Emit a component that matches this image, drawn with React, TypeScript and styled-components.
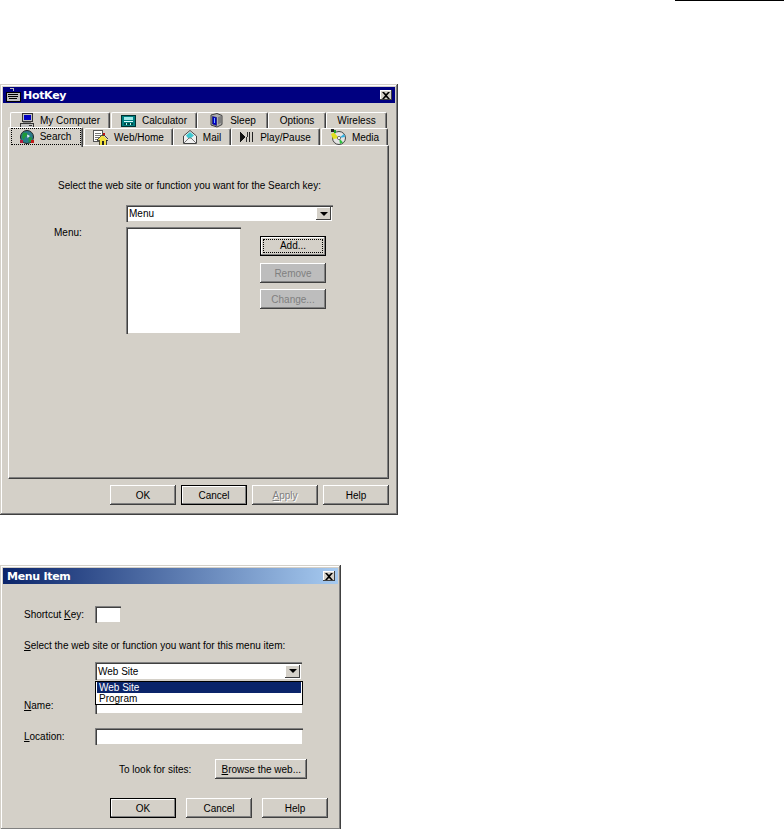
import React from "react";
import styled, { createGlobalStyle } from "styled-components";

const Global = createGlobalStyle`
  html, body { margin: 0; padding: 0; background: #fff; }
  body { font-family: "Liberation Sans", Arial, sans-serif; font-size: 10px; color: #000; }
`;

const Page = styled.div`
  width: 784px;
  height: 829px;
  overflow: hidden;
  background: #fff;
`;
const TopRule = styled.div`
  height: 1px;
  margin-left: 675px;
  background: #000;
`;
const Dialog = styled.div<{ $w: number; $h: number; $mt: number }>`
  box-sizing: border-box;
  width: ${(p) => p.$w}px;
  height: ${(p) => p.$h}px;
  margin-top: ${(p) => p.$mt}px;
  padding: 3px;
  background: #d4d0c8;
  box-shadow: inset -1px -1px #404040, inset 1px 1px #d4d0c8, inset -2px -2px #808080, inset 2px 2px #fff;
`;
const TitleBar = styled.div<{ $gradient?: boolean }>`
  height: 16px;
  display: flex;
  align-items: center;
  padding: 0 3px 0 2px;
  background: ${(p) => (p.$gradient ? "linear-gradient(90deg, #0a246a, #a6caf0)" : "#000080")};
  color: #fff;
  font: bold 11px "DejaVu Sans", Verdana, sans-serif;
  letter-spacing: -0.3px;
`;
const TitleText = styled.span`
  flex: 1;
  margin-left: 2px;
  white-space: nowrap;
`;
const CloseBox = styled.span`
  width: 12px;
  height: 10px;
  background: #d4d0c8;
  box-shadow: inset -1px -1px #404040, inset 1px 1px #fff;
  display: flex;
  align-items: center;
  justify-content: center;
`;
const TabRow = styled.div<{ $ml: number; $mt: number; $front?: boolean }>`
  display: flex;
  height: ${(p) => (p.$front ? 17 : 16)}px;
  margin: ${(p) => p.$mt}px 0 0 ${(p) => p.$ml}px;
  position: relative;
  z-index: ${(p) => (p.$front ? 2 : 1)};
`;
const Tab = styled.div<{ $w: number; $active?: boolean; $ml?: number }>`
  box-sizing: border-box;
  width: ${(p) => p.$w}px;
  height: ${(p) => (p.$active ? 20 : "auto")};
  margin-left: ${(p) => p.$ml ?? 0}px;
  display: flex;
  align-items: center;
  justify-content: center;
  gap: 6px;
  background: #d4d0c8;
  white-space: nowrap;
  border-top: 1px solid #fff;
  border-left: 1px solid #fff;
  border-right: 1px solid #404040;
  border-top-left-radius: 2px;
  border-top-right-radius: 2px;
  box-shadow: inset -1px 0 #808080;
  ${(p) =>
    p.$active &&
    `
    height: 20px;
    margin-top: -1px;
    position: relative;
    z-index: 3;
  `}
`;
const FocusBox = styled.span`
  display: flex;
  align-items: center;
  justify-content: center;
  gap: 6px;
  width: 68px;
  height: 15px;
  outline: 1px dotted #000;
  margin-top: -2px;
`;
const Panel = styled.div`
  box-sizing: border-box;
  width: 381px;
  height: 334px;
  margin-left: 5px;
  padding: 33px 0 0 45px;
  border-top: 1px solid #fff;
  border-left: 1px solid #fff;
  border-right: 1px solid #404040;
  border-bottom: 1px solid #404040;
  box-shadow: inset -1px -1px #808080;
`;
const Prompt = styled.div<{ $ml?: number; $mt?: number }>`
  height: 13px;
  line-height: 13px;
  margin-left: ${(p) => p.$ml ?? 0}px;
  margin-top: ${(p) => p.$mt ?? 0}px;
  white-space: nowrap;
`;
const Sunken = styled.div<{ $w: number; $h: number }>`
  box-sizing: border-box;
  width: ${(p) => p.$w}px;
  height: ${(p) => p.$h}px;
  background: #fff;
  box-shadow: inset 1px 1px #808080, inset 2px 2px #404040, inset -1px -1px #d4d0c8, inset -2px -2px #fff;
`;
const ComboWrap = styled.div<{ $ml: number; $mt: number }>`
  position: relative;
  width: 207px;
  margin-left: ${(p) => p.$ml}px;
  margin-top: ${(p) => p.$mt}px;
`;
const ComboBox = styled(Sunken)`
  display: flex;
  align-items: center;
  justify-content: space-between;
  padding: 0 2px 0 3px;
`;
const ArrowBtn = styled.span`
  width: 15px;
  height: ${13}px;
  background: #d4d0c8;
  box-shadow: inset -1px -1px #404040, inset 1px 1px #fff;
  display: flex;
  align-items: center;
  justify-content: center;
`;
const Arrow = styled.span`
  width: 0;
  height: 0;
  border-left: 4px solid transparent;
  border-right: 4px solid transparent;
  border-top: 4px solid #000;
`;
const DropList = styled.div`
  position: absolute;
  z-index: 5;
  top: 19px;
  left: 0;
  box-sizing: border-box;
  width: 208px;
  height: 24px;
  padding: 0 1px;
  background: #fff;
  border: 1px solid #000;
`;
const DropItem = styled.div<{ $selected?: boolean }>`
  height: 11px;
  line-height: 11px;
  padding-left: 2px;
  background: ${(p) => (p.$selected ? "#0a246a" : "transparent")};
  color: ${(p) => (p.$selected ? "#fff" : "#000")};
`;
const ListRow = styled.div`
  display: flex;
  margin-top: 5px;
`;
const FieldLabel = styled.div<{ $w: number; $offset?: number }>`
  width: ${(p) => p.$w}px;
  height: 13px;
  line-height: 13px;
  flex: none;
  margin-top: ${(p) => p.$offset ?? 0}px;
  white-space: nowrap;
`;
const ButtonColumn = styled.div`
  display: flex;
  flex-direction: column;
  margin: 9px 0 0 19px;
`;
const Button = styled.div<{ $w?: number; $default?: boolean; $muted?: boolean; $grayed?: boolean; $mt?: number }>`
  box-sizing: border-box;
  width: ${(p) => p.$w ?? 66}px;
  height: 20px;
  margin-top: ${(p) => p.$mt ?? 0}px;
  display: flex;
  align-items: center;
  justify-content: center;
  background: ${(p) => (p.$grayed ? "#bdbdbd" : "#d4d0c8")};
  color: ${(p) => (p.$muted ? "#808080" : "#000")};
  text-shadow: ${(p) => (p.$muted && !p.$grayed ? "1px 1px #fff" : "none")};
  box-shadow: ${(p) =>
    p.$default
      ? "inset 0 0 0 1px #000, inset -2px -2px #808080, inset 2px 2px #fff"
      : "inset -1px -1px #404040, inset 1px 1px #fff, inset -2px -2px #808080"};
`;
const FocusLabel = styled.span`
  box-sizing: border-box;
  width: 58px;
  height: 12px;
  line-height: 12px;
  text-align: center;
  outline: 1px dotted #000;
`;
const Footer = styled.div<{ $pl: number; $mt: number; $gap: number }>`
  display: flex;
  gap: ${(p) => p.$gap}px;
  padding-left: ${(p) => p.$pl}px;
  margin-top: ${(p) => p.$mt}px;
`;
const Body = styled.div`
  padding-left: 21px;
`;
const FormRow = styled.div<{ $mt: number }>`
  display: flex;
  align-items: center;
  margin-top: ${(p) => p.$mt}px;
`;
const BrowseRow = styled.div`
  display: flex;
  align-items: center;
  margin-top: 14px;
  padding-left: 95px;
  gap: 24px;
`;

const CloseIcon = () => (
  <svg width="8" height="7" viewBox="0 0 8 7">
    <path d="M0 0h2l2 2 2-2h2L5 3.5 8 7H6L4 5 2 7H0l3-3.5z" fill="#000" />
  </svg>
);
const KeyboardIcon = () => (
  <svg width="16" height="16" viewBox="0 0 16 16" shapeRendering="crispEdges">
    <path d="M8 1h1v3H8zM5 1h3v1H5z" fill="#c0c0c0" />
    <rect x="1" y="5" width="14" height="9" fill="#c0c0c0" stroke="#000" />
    <rect x="3" y="7" width="10" height="1" fill="#000" />
    <rect x="3" y="9" width="10" height="1" fill="#000" />
    <rect x="4" y="11" width="8" height="1" fill="#000" />
    <rect x="1" y="14" width="14" height="1" fill="#000" />
  </svg>
);
const ComputerIcon = () => (
  <svg width="14" height="16" viewBox="0 0 14 16" shapeRendering="crispEdges">
    <rect x="2.5" y="0.5" width="10" height="8" fill="#c0c0c0" stroke="#333" />
    <rect x="4" y="2" width="7" height="5" fill="#0000c0" />
    <rect x="0.5" y="10.5" width="13" height="4" fill="#c0c0c0" stroke="#333" />
    <rect x="3" y="9" width="8" height="1" fill="#808080" />
    <rect x="9" y="12" width="3" height="1" fill="#333" />
  </svg>
);
const CalculatorIcon = () => (
  <svg width="15" height="12" viewBox="0 0 15 12" shapeRendering="crispEdges">
    <rect x="0.5" y="0.5" width="14" height="11" fill="#008080" stroke="#003030" />
    <rect x="3" y="2" width="9" height="3" fill="#9fe8e8" />
    <rect x="3" y="6" width="9" height="1" fill="#dff" />
    <rect x="3" y="8" width="9" height="2" fill="#004848" />
    <rect x="5" y="8" width="1" height="2" fill="#bfe" />
    <rect x="9" y="8" width="1" height="2" fill="#bfe" />
  </svg>
);
const SleepIcon = () => (
  <svg width="15" height="15" viewBox="0 0 15 15">
    <path d="M2 2l6-1.5 5 2v9l-5 2.5-6-2z" fill="#b0b0b0" stroke="#404040" />
    <path d="M3.5 3.5l4 1v8l-4-1.5z" fill="#0000c8" stroke="#101060" strokeWidth=".6" />
    <path d="M9 4l3-1v7l-3 1.5z" fill="#808080" />
    <path d="M5 5h1v5H5z" fill="#70b0ff" />
  </svg>
);
const GlobeIcon = () => (
  <svg width="14" height="14" viewBox="0 0 14 14">
    <circle cx="7" cy="7" r="6.5" fill="#2a7a8a" stroke="#222" />
    <path d="M3 2.5l4 .5 1 3-3 1-1 3-2-2.5zM9 7l3 .5-1 4-2.5 1z" fill="#1e9a3a" />
    <path d="M7 4.5l3 1.5-2.5 2z" fill="#e8f4ff" />
    <rect x="11" y="10" width="3" height="3" fill="#c01818" />
    <rect x="0" y="10" width="3" height="3" fill="#b02040" />
  </svg>
);
const HomeIcon = () => (
  <svg width="15" height="15" viewBox="0 0 15 15" shapeRendering="crispEdges">
    <rect x="0.5" y="0.5" width="9" height="11" fill="#fff" stroke="#555" />
    <path d="M2 3h6v1H2zM2 5h6v1H2zM2 7h4v1H2zM2 9h3v1H2z" fill="#777" />
    <path d="M10 3h2v2h-2z" fill="#c01010" />
    <path d="M9.5 5L15 10h-2v5H6v-5H4z" fill="#f0e040" stroke="#222" strokeWidth=".8" />
    <rect x="9" y="11" width="2" height="4" fill="#222" />
  </svg>
);
const MailIcon = () => (
  <svg width="14" height="14" viewBox="0 0 14 14">
    <path d="M.5 6L7 .5 13.5 6v7.5H.5z" fill="#f0f0f0" stroke="#444" />
    <path d="M3 5.5L7 2l4 3.5L8 8H5z" fill="#40c8d0" />
    <path d="M.5 13.5L6 8h2l5.5 5.5" fill="none" stroke="#777" />
  </svg>
);
const PlayPauseIcon = () => (
  <svg width="14" height="10" viewBox="0 0 14 10" shapeRendering="crispEdges">
    <path d="M0 0l5 5-5 5z" fill="#111" />
    <path d="M7.5 0h1L6.5 10h-1z" fill="#333" />
    <rect x="9" y="0" width="1.4" height="10" fill="#222" />
    <rect x="12" y="0" width="1.4" height="10" fill="#222" />
  </svg>
);
const MediaIcon = () => (
  <svg width="16" height="16" viewBox="0 0 16 16">
    <circle cx="9" cy="9" r="6.5" fill="#e4e4e4" stroke="#444" />
    <path d="M9 9L4 3.5 1 5l2 5z" fill="#e0e020" />
    <path d="M9 9l1 6 3-1.5z" fill="#30c040" />
    <path d="M9 9l6-1-1-3z" fill="#30b0e0" />
    <circle cx="9" cy="9" r="1.6" fill="#fff" stroke="#444" strokeWidth=".7" />
    <rect x="1" y="0" width="3" height="3" fill="#222" />
    <rect x="4" y="1" width="2" height="3" fill="#20a030" />
  </svg>
);

export default function App() {
  return (
    <Page>
      <Global />
      <TopRule />
      <Dialog $w={398} $h={431} $mt={83}>
        <TitleBar>
          <KeyboardIcon />
          <TitleText>HotKey</TitleText>
          <CloseBox>
            <CloseIcon />
          </CloseBox>
        </TitleBar>
        <TabRow $ml={7} $mt={9}>
          <Tab $w={100}><ComputerIcon />My Computer</Tab>
          <Tab $w={86} $ml={1}><CalculatorIcon />Calculator</Tab>
          <Tab $w={71}><SleepIcon />Sleep</Tab>
          <Tab $w={58}>Options</Tab>
          <Tab $w={61}>Wireless</Tab>
        </TabRow>
        <TabRow $ml={5} $mt={0} $front>
          <Tab $w={75} $active>
            <FocusBox><GlobeIcon />Search</FocusBox>
          </Tab>
          <Tab $w={89} $ml={1}><HomeIcon />Web/Home</Tab>
          <Tab $w={58}><MailIcon />Mail</Tab>
          <Tab $w={89}><PlayPauseIcon />Play/Pause</Tab>
          <Tab $w={67} $ml={1}><MediaIcon />Media</Tab>
        </TabRow>
        <Panel>
          <Prompt $ml={4}>Select the web site or function you want for the Search key:</Prompt>
          <ComboWrap $ml={72} $mt={13}>
            <ComboBox $w={207} $h={17}>
              Menu
              <ArrowBtn><Arrow /></ArrowBtn>
            </ComboBox>
          </ComboWrap>
          <ListRow>
            <FieldLabel $w={72} $offset={-1}>Menu:</FieldLabel>
            <Sunken $w={115} $h={107} />
            <ButtonColumn>
              <Button $default><FocusLabel>Add...</FocusLabel></Button>
              <Button $muted $grayed $mt={7}>Remove</Button>
              <Button $muted $grayed $mt={6}>Change...</Button>
            </ButtonColumn>
          </ListRow>
        </Panel>
        <Footer $pl={107} $mt={6} $gap={5}>
          <Button>OK</Button>
          <Button $default>Cancel</Button>
          <Button $muted><span><u>A</u>pply</span></Button>
          <Button $mt={0}>Help</Button>
        </Footer>
      </Dialog>

      <Dialog $w={341} $h={265} $mt={50}>
        <TitleBar $gradient>
          <TitleText>Menu Item</TitleText>
          <CloseBox>
            <CloseIcon />
          </CloseBox>
        </TitleBar>
        <Body>
          <FormRow $mt={22}>
            <FieldLabel $w={71}>Shortcut <u>K</u>ey:</FieldLabel>
            <Sunken $w={26} $h={17} />
          </FormRow>
          <Prompt $mt={16}><u>S</u>elect the web site or function you want for this menu item:</Prompt>
          <ComboWrap $ml={71} $mt={10}>
            <ComboBox $w={207} $h={18}>
              Web Site
              <ArrowBtn><Arrow /></ArrowBtn>
            </ComboBox>
            <DropList>
              <DropItem $selected>Web Site</DropItem>
              <DropItem>Program</DropItem>
            </DropList>
          </ComboWrap>
          <FormRow $mt={16}>
            <FieldLabel $w={71}><u>N</u>ame:</FieldLabel>
            <Sunken $w={208} $h={18} />
          </FormRow>
          <FormRow $mt={14}>
            <FieldLabel $w={71}><u>L</u>ocation:</FieldLabel>
            <Sunken $w={208} $h={17} />
          </FormRow>
          <BrowseRow>
            <span>To look for sites:</span>
            <Button $w={92}><span><u>B</u>rowse the web...</span></Button>
          </BrowseRow>
        </Body>
        <Footer $pl={107} $mt={19} $gap={10}>
          <Button $default>OK</Button>
          <Button>Cancel</Button>
          <Button>Help</Button>
        </Footer>
      </Dialog>
    </Page>
  );
}
